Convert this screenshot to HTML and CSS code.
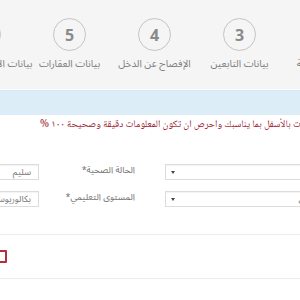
FILE: index.html
```html
<!DOCTYPE html>
<html lang="ar">
<head>
<meta charset="utf-8">
<link rel="stylesheet" href="styles.css">
</head>
<body>
<div class="page">
  <div class="steps-band">
    <ol class="steps">
      <li class="step"><span class="circle">1</span><span class="step-label">البيانات الشخصية</span></li>
      <li class="step"><span class="circle">2</span><span class="step-label">بيانات الزوجية</span></li>
      <li class="step"><span class="circle">3</span><span class="step-label">بيانات التابعين</span></li>
      <li class="step"><span class="circle">4</span><span class="step-label">الإفصاح عن الدخل</span></li>
      <li class="step"><span class="circle">5</span><span class="step-label">بيانات العقارات</span></li>
      <li class="step"><span class="circle">6</span><span class="step-label">بيانات الأسهم والسندات</span></li>
    </ol>
  </div>
  <div class="alert"></div>
  <p class="notice">قم بإدخال البيانات بالأسفل بما يناسبك  واحرص ان تكون المعلومات دقيقة وصحيحة ١٠٠ %</p>
  <div class="form">
    <div class="row">
      <div class="field">
        <label class="label">الحالة الاجتماعية*</label>
        <div class="input select"><span class="value"></span><span class="arrow"></span></div>
      </div>
      <div class="field">
        <label class="label">الحالة الصحية*</label>
        <div class="input"><span class="value">سليم</span></div>
      </div>
    </div>
    <div class="row">
      <div class="field">
        <label class="label">الحالة الوظيفية*</label>
        <div class="input select"><span class="value">عامل</span><span class="arrow"></span></div>
      </div>
      <div class="field">
        <label class="label">المستوى التعليمي*</label>
        <div class="input"><span class="value">بكالوريوس</span></div>
      </div>
    </div>
  </div>
  <hr class="sep">
  <div class="check-row"><span class="checkbox"></span><span class="check-label">أقر بصحة البيانات</span></div>
  <hr class="sep">
</div>
</body>
</html>
```

FILE: styles.css
```css
html, body {
  margin: 0;
  padding: 0;
  background: #fff;
  overflow: hidden;
}
body {
  width: 300px;
  height: 300px;
  font-family: "Noto Sans Arabic", "DejaVu Sans", sans-serif;
}
.page {
  width: 560px;
  margin-left: -100px;
  direction: rtl;
}
.steps-band {
  height: 89px;
  background: #f5f5f5;
}
.steps {
  list-style: none;
  padding: 18px 0 0;
  display: flex;
  width: 510px;
  margin: 0 8px 0 42px;
}
.step {
  width: 85px;
  display: flex;
  flex-direction: column;
  align-items: center;
}
.circle {
  width: 31px;
  height: 31px;
  border: 1.5px solid #c4c4c4;
  border-radius: 50%;
  display: flex;
  align-items: center;
  justify-content: center;
  font-family: "Open Sans", "DejaVu Sans", sans-serif;
  font-weight: 700;
  font-size: 16px;
  color: #8a8a8a;
}
.step-label {
  margin-top: 5px;
  font-size: 10px;
  line-height: 16px;
  color: #7d7d7d;
  white-space: nowrap;
}
.alert {
  margin-top: 1px;
  height: 25px;
  background: #dcedf7;
  border-top: 1px solid #d3e8f3;
  box-sizing: border-box;
}
.notice {
  margin: 0;
  height: 20px;
  line-height: 20px;
  padding-left: 140px;
  text-align: left;
  font-family: "Noto Naskh Arabic", "Noto Sans Arabic", "DejaVu Sans", serif;
  font-size: 10px;
  color: #9b2231;
  white-space: nowrap;
}
.form {
  margin-top: 29px;
  padding-right: 39px;
  display: flex;
  flex-direction: column;
  gap: 11px;
}
.row {
  display: flex;
  gap: 30px;
}
.field {
  display: flex;
  gap: 8px;
  align-items: center;
}
.label {
  width: 88px;
  font-size: 9px;
  color: #727272;
  white-space: nowrap;
  line-height: 12px;
  margin-top: -3px;
}
.input {
  width: 160px;
  height: 16px;
  border: 1px solid #dcdcdc;
  box-shadow: inset 0 1px 1px rgba(0,0,0,0.05);
  box-sizing: border-box;
  display: flex;
  align-items: center;
  justify-content: space-between;
  padding: 0 7px 0 5px;
  background: #fff;
}
.value {
  font-size: 9px;
  color: #777;
  white-space: nowrap;
}
.arrow {
  width: 0;
  height: 0;
  border-left: 2px solid transparent;
  border-right: 2px solid transparent;
  border-top: 3px solid #444;
}
.sep {
  margin: 27px 0 0;
  border: 0;
  border-top: 1px solid #ececec;
}
.check-row {
  margin-top: 15px;
  height: 13px;
  display: flex;
  align-items: center;
  gap: 6px;
  padding-right: 453px;
}
.checkbox {
  width: 13px;
  height: 13px;
  box-sizing: border-box;
  border: 2px solid #b32f3d;
  border-radius: 1px;
  background: #fff;
  flex: none;
}
.check-label {
  font-size: 10px;
  color: #555;
  white-space: nowrap;
}
.check-row + .sep {
  margin-top: 15px;
}
```
